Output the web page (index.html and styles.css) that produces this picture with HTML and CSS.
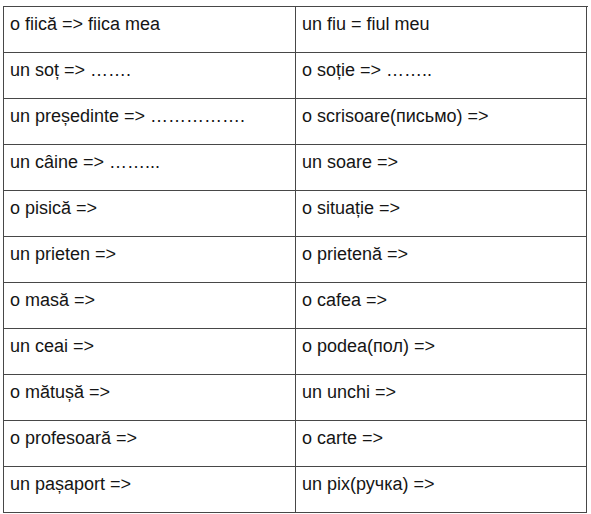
FILE: index.html
```html
<!DOCTYPE html>
<html lang="ro">
<head>
<meta charset="utf-8">
<link rel="stylesheet" href="styles.css">
</head>
<body>
<div class="table">
  <div class="cell">o fiică =&gt; fiica mea</div>
  <div class="cell">un fiu = fiul meu</div>
  <div class="cell">un soț =&gt; …….</div>
  <div class="cell">o soție =&gt; ……..</div>
  <div class="cell">un președinte =&gt; …………….</div>
  <div class="cell">o scrisoare(письмо) =&gt;</div>
  <div class="cell">un câine =&gt; ……...</div>
  <div class="cell">un soare =&gt;</div>
  <div class="cell">o pisică =&gt;</div>
  <div class="cell">o situație =&gt;</div>
  <div class="cell">un prieten =&gt;</div>
  <div class="cell">o prietenă =&gt;</div>
  <div class="cell">o masă =&gt;</div>
  <div class="cell">o cafea =&gt;</div>
  <div class="cell">un ceai =&gt;</div>
  <div class="cell">o podea(пол) =&gt;</div>
  <div class="cell">o mătușă =&gt;</div>
  <div class="cell">un unchi =&gt;</div>
  <div class="cell">o profesoară =&gt;</div>
  <div class="cell">o carte =&gt;</div>
  <div class="cell">un pașaport =&gt;</div>
  <div class="cell">un pix(ручка) =&gt;</div>
</div>
</body>
</html>
```
FILE: styles.css
```css
html, body {
  margin: 0;
  background: #ffffff;
}
body {
  padding: 6px 0 0 3px;
  font-family: "Liberation Sans", Arial, sans-serif;
  font-size: 18px;
  color: #151515;
}
.table {
  display: grid;
  grid-template-columns: 292px 291px;
  grid-auto-rows: 46px;
  width: 584px;
  border-top: 1px solid #474747;
  border-left: 1px solid #474747;
}
.cell {
  border-right: 1px solid #474747;
  border-bottom: 1px solid #474747;
  padding: 7px 6px 0 6px;
  line-height: 21px;
  white-space: nowrap;
}
```
